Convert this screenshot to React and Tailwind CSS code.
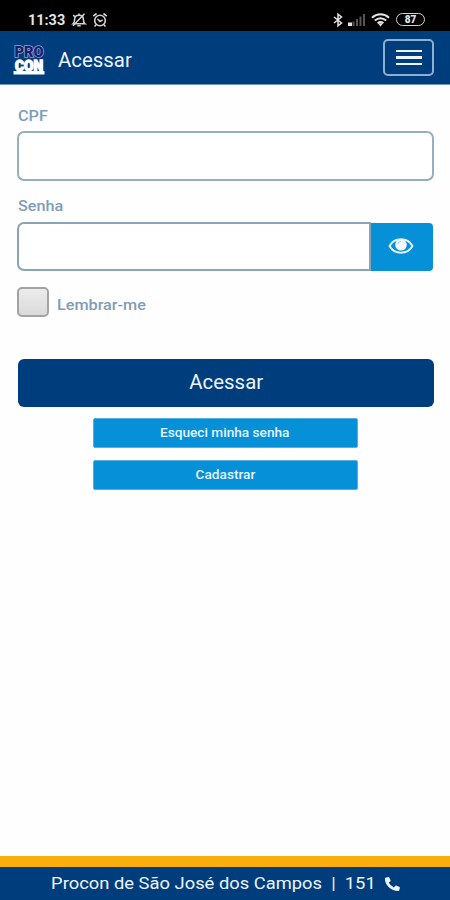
import React, { useState } from 'react';
import { FaPhoneAlt } from 'react-icons/fa';

const StatusBar = () => (
  <div className="flex h-[31px] items-center justify-between bg-black pt-[8px] pr-[25px] pl-[28px] text-[#e4e4e4]">
    <div className="flex items-center">
      <span className="w-[38px] origin-left scale-x-[1.03] text-[14px] leading-none font-bold">11:33</span>
      <svg className="ml-[5px]" width="16" height="16" viewBox="0 0 16 16" fill="none" stroke="#d2d2d2" strokeWidth="1.6">
        <path d="M2 11.8h12c-1.600-1.200-1.600-2.400-1.600-4.400 0-2.600-1.700-4.200-4.400-4.200S3.600 4.800 3.600 7.400c0 2-.2 3.200-1.600 4.400z" />
        <path d="M6.300 13.800h3.400M8 1.500V3M2 13.800L13.500 1.800M2.200 3.200l2 1.800" />
      </svg>
      <svg className="ml-[5px]" width="16" height="16" viewBox="0 0 16 16" fill="none" stroke="#d2d2d2" strokeWidth="1.6">
        <circle cx="8" cy="8.500" r="5.300" />
        <path d="M1.200 4.200L4.600 1.500M14.800 4.200L11.400 1.500M3.900 12.800l-1.200 1.600M12.100 12.800l1.200 1.600M5.400 7L8 9.400l2.600-1.500" />
      </svg>
    </div>
    <div className="flex items-center">
      <svg width="10" height="14" viewBox="0 0 10 14" fill="none" stroke="currentColor" strokeWidth="1.5">
        <path d="M1 4l7.500 6L5 12.800V1.200L8.500 4 1 10" />
      </svg>
      <svg className="ml-[5px]" width="18" height="12" viewBox="0 0 18 12" fill="#555">
        <path d="M0 8.500h4V12H0z" fill="#e4e4e4" />
        <path d="M4.500 7.500h2V12h-2zM8 5h2v7H8zM11.500 2.500h2V12h-2zM15 0h2v12h-2z" />
      </svg>
      <svg className="ml-[5px]" width="19" height="14" viewBox="0 0 19 14" fill="none" stroke="currentColor" strokeWidth="2">
        <path d="M1 4.800c5-4.600 12-4.600 17 0M3.800 7.600c3.600-3 7.800-3 11.400 0M6.600 10.200c1.800-1.400 4-1.400 5.800 0" />
        <path d="M6.800 10.300h5.400l-2.700 3.200z" fill="currentColor" stroke="none" />
      </svg>
      <div className="ml-[6px] flex h-[13px] w-[29px] items-center justify-center rounded-full border border-[#d4d4d4] text-[10px] leading-none font-black">
        87
      </div>
    </div>
  </div>
);

const Logo = () => (
  <svg className="mt-[3px] overflow-visible" width="32" height="34" viewBox="0 0 32 34" fontFamily="Roboto, sans-serif" fontWeight="900" textAnchor="middle">
    <text x="16" y="14.500" fontSize="14" textLength="29" lengthAdjust="spacingAndGlyphs" fill="#16226f" stroke="#8ea4d4" strokeWidth="1.500" paintOrder="stroke">
      PRO
    </text>
    <text x="16" y="29" fontSize="15" textLength="28" lengthAdjust="spacingAndGlyphs" fill="#fff" stroke="#fff" strokeWidth="1.400">
      CON
    </text>
    <path d="M.5 29h31v3.500H.5z" fill="#fff" />
  </svg>
);

const Header = () => (
  <header className="flex h-[54px] items-center border-b border-[#7297be] bg-[#003d7d] pr-[16px] pl-[13px]">
    <Logo />
    <h1 className="mt-[5px] ml-[13px] origin-left scale-x-[1.02] text-[20px] leading-none text-[#eef4fb]">Acessar</h1>
    <button aria-label="Menu" className="ml-auto flex h-[37px] w-[51px] flex-col items-center justify-center gap-[4px] rounded-[5px] border-2 border-[#8fafd2]">
      <span className="h-[2.5px] w-[26px] bg-[#eef4fb]" />
      <span className="h-[2.5px] w-[26px] bg-[#eef4fb]" />
      <span className="h-[2.5px] w-[26px] bg-[#eef4fb]" />
    </button>
  </header>
);

const EyeIcon = () => (
  <svg width="26" height="18" viewBox="0 0 26 18">
    <path d="M1.500 9C6.500 0 19.500 0 24.500 9 19.500 18 6.500 18 1.500 9z" fill="none" stroke="#e8f6fd" strokeWidth="1.9" />
    <circle cx="13" cy="7.800" r="5.800" fill="#f4fbff" />
    <path d="M9.800 7.200c.2-1.600 1.200-2.500 2.800-2.700" fill="none" stroke="#7cc4ea" strokeWidth="1" />
  </svg>
);

const labelClass = 'block w-fit origin-left scale-x-[1.08] text-[15px] leading-[18px] font-medium text-[#7f9cb9]';

const App = () => {
  const [form, setForm] = useState({ cpf: '', senha: '' });
  const [showPassword, setShowPassword] = useState(false);
  const [remember, setRemember] = useState(false);

  const handleChange = (e) => {
    setForm({ ...form, [e.target.name]: e.target.value });
  };

  return (
    <div className="flex h-screen flex-col bg-[#fefefe] font-['Roboto',sans-serif]">
      <StatusBar />
      <Header />
      <main className="flex-1 px-[17px] pt-[22px]">
        <form onSubmit={(e) => e.preventDefault()}>
          <label htmlFor="cpf" className={`ml-px ${labelClass}`}>CPF</label>
          <input id="cpf" name="cpf" value={form.cpf} onChange={handleChange} className="mt-[6px] block h-[50px] w-[417px] rounded-[7px] border-2 border-[#96aec0] bg-white px-3 outline-none" />

          <label htmlFor="senha" className={`mt-[16px] ml-px ${labelClass}`}>Senha</label>
          <div className="mt-[7px] flex w-[416px] items-center">
            <input id="senha" name="senha" type={showPassword ? 'text' : 'password'} value={form.senha} onChange={handleChange} className="h-[49px] flex-1 rounded-l-[7px] border-2 border-[#8aa3b7] bg-white px-3 outline-none" />
            <button type="button" aria-label="Mostrar senha" onClick={() => setShowPassword(!showPassword)} className="flex h-[48px] w-[62px] items-center justify-center rounded-r-[4px] bg-[#0590d8] pr-[2px] pb-[2px]">
              <EyeIcon />
            </button>
          </div>

          <div className="mt-[16px] flex h-[30px] items-center">
            <input id="lembrar" type="checkbox" checked={remember} onChange={() => setRemember(!remember)} className="h-[30px] w-[32px] appearance-none rounded-[5px] border-2 border-[#a3a3a3] bg-linear-to-b from-[#ececec] to-[#dadada]" />
            <label htmlFor="lembrar" className={`mt-[6px] ml-[8px] ${labelClass}`}>Lembrar-me</label>
          </div>

          <button type="submit" className="mt-[42px] ml-px flex h-[48px] w-[416px] items-center justify-center rounded-[6px] bg-[#003d7d] pb-[2px] text-[20px] text-[#eef4fb]">
            <span className="scale-x-[1.02]">Acessar</span>
          </button>
        </form>

        <div className="mt-[11px] flex flex-col items-center gap-[12px] text-[13px] font-medium text-[#e3f4fd]">
          <button className="h-[30px] w-[265px] rounded-[2px] border border-[#58aede] bg-[#0590d8]">
            <span className="inline-block scale-x-[1.05]">Esqueci minha senha</span>
          </button>
          <button className="h-[30px] w-[265px] rounded-[2px] border border-[#58aede] bg-[#0590d8]">
            <span className="inline-block scale-x-[1.05]">Cadastrar</span>
          </button>
        </div>
      </main>
      <footer className="flex h-[44px] items-center justify-center border-t-[11px] border-[#f9ae0b] bg-[#003d7d] pt-[1px] text-[17px] text-[#eef4fb]">
        <span className="flex scale-x-[1.08] items-center whitespace-pre">
          Procon de São José dos Campos  |  151
          <FaPhoneAlt className="ml-[8px]" size={14} />
        </span>
      </footer>
    </div>
  );
};

export default App;
